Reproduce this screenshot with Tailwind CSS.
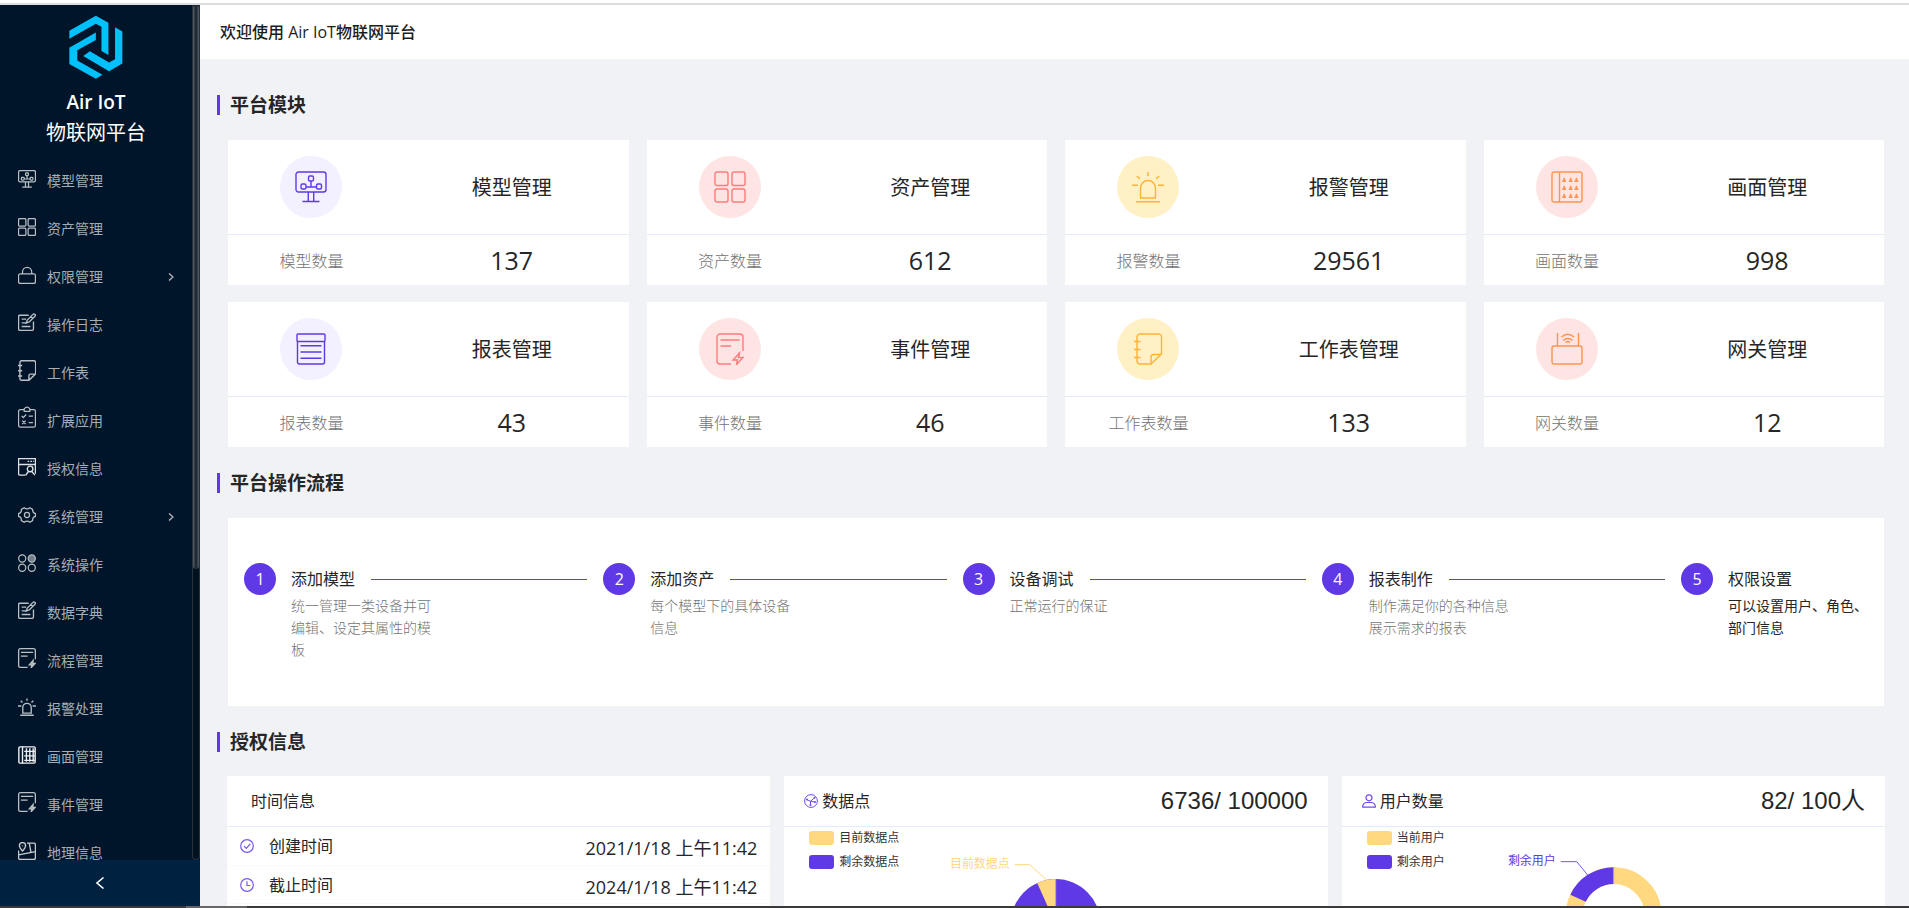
<!DOCTYPE html>
<html lang="zh-CN">
<head>
<meta charset="utf-8">
<title>Air IoT物联网平台</title>
<script src="https://cdn.jsdelivr.net/npm/@tailwindcss/browser@4"></script>
</head>
<body class="flex h-screen flex-col overflow-hidden bg-white font-['Open_Sans','Noto_Sans_CJK_SC',sans-serif] text-base leading-6 text-[#262626]">

<svg class="hidden" aria-hidden="true">
  <symbol id="i-model" viewBox="0 0 32 32"><rect x="1" y="1" width="30" height="20" rx="2.5"/><rect x="13.5" y="5" width="5" height="5" rx="1.5"/><rect x="6" y="13" width="5" height="5" rx="1.5"/><rect x="21.500" y="13" width="5" height="5" rx="1.5"/><path d="M16 10v6M11 16h10.500M13.300 21v9.500M18.700 21v9.500M7.500 30.500h17"/></symbol>
  <symbol id="i-grid" viewBox="0 0 32 32"><rect x="1" y="1" width="13" height="13.500" rx="2"/><rect x="18" y="1" width="13" height="13.500" rx="2"/><rect x="1" y="18" width="13" height="13" rx="2"/><rect x="18" y="18" width="13" height="13" rx="2"/></symbol>
  <symbol id="i-alarm" viewBox="0 0 32 32"><path d="M8.500 27V17a7.500 7.500 0 0 1 15 0v10zM4 30.700h24M16 1v4M4.800 5l3.200 3M27.200 5L24 8M0 14.200h6M26 14.200h6"/></symbol>
  <symbol id="i-screen" viewBox="0 0 32 32"><rect x="1" y="1" width="30" height="30" rx="2"/><path d="M8.500 1v30"/><path fill="currentColor" stroke="none" d="M13.200 6l2.200 5H11zM19.700 6l2.200 5h-4.400zM25.400 6l2.200 5h-4.400zM13.200 14l2.200 5H11zM19.700 14l2.200 5h-4.400zM25.400 14l2.200 5h-4.400zM13.200 22l2.200 5H11zM19.700 22l2.200 5h-4.400zM25.400 22l2.200 5h-4.400z"/></symbol>
  <symbol id="i-report" viewBox="0 0 32 32"><rect x="2" y="1" width="28" height="7.500" rx="1"/><path d="M2.500 8.500V29a2 2 0 0 0 2 2h23a2 2 0 0 0 2-2V8.500M5.500 12.800h21M5.500 19h21M5.500 25.200h21"/></symbol>
  <symbol id="i-event" viewBox="0 0 32 32"><path d="M17 31H6a3 3 0 0 1-3-3V4a3 3 0 0 1 3-3h20a3 3 0 0 1 3 3v14M6.500 7h19M6.500 13h10.500M25.500 20l-6.500 7h4.500l-1 4.500 6.500-7h-4.500z"/></symbol>
  <symbol id="i-sheet" viewBox="0 0 32 32"><path d="M8 1h18.500a3 3 0 0 1 3 3v17L19 31H8a3 3 0 0 1-3-3V4a3 3 0 0 1 3-3zM19 31v-7a2.500 2.500 0 0 1 2.500-2.500h8M2 8.500h6.500M2 16.500h6.500M2 24.500h6.500"/></symbol>
  <symbol id="i-gateway" viewBox="0 0 32 32"><rect x="1" y="13" width="30" height="18" rx="2"/><path d="M6.500 0v13M27.500 0v13M10.500 4q6.200-5.500 12.500 0M12 7.500q4.800-4.200 9.500 0M14.500 9.500q2.200-2 4.500 0"/></symbol>
  <symbol id="i-lock" viewBox="0 0 32 32"><rect x="1" y="14" width="30" height="17" rx="3"/><path d="M8 14v-3.500a8.200 8.200 0 0 1 16.400 0V14"/></symbol>
  <symbol id="i-log" viewBox="0 0 32 32"><path d="M19 4H3.500A2.500 2.500 0 0 0 1 6.500v22A2.500 2.500 0 0 0 3.500 31H25a2.500 2.500 0 0 0 2.500-2.500V15M6.500 11h8M6.500 17.500h7M6.500 24h15.500M26.500 2.500a2.400 2.400 0 0 1 3.600 3.200L20 16l-5.500 2 2-5.500zM22.500 6.500l3.600 3.400"/></symbol>
  <symbol id="i-plugin" viewBox="0 0 32 38"><path d="M11 6H4a3 3 0 0 0-3 3v25a3 3 0 0 0 3 3h24a3 3 0 0 0 3-3V9a3 3 0 0 0-3-3h-7M11 9V4.500q5-6 10 0V9zM6.500 17l3 3 5-5.500M7.500 25.500l6 6M13.500 25.500l-6 6M19 17.500h7.500M19 29h7.500"/></symbol>
  <symbol id="i-auth" viewBox="0 0 32 32"><path d="M13 30.500H3.500A2.500 2.500 0 0 1 1 28V1h30v27M1 11.500h30M17 6h3M22 6h3M27 6h2"/><circle cx="21.500" cy="19.500" r="5"/><path d="M18.500 24l-5 7M24.500 24l5.500 6.500"/></symbol>
  <symbol id="i-gear" viewBox="0 0 32 32"><path d="M11 3Q16 7 21 3l5 3q-.5 6 5 7.500v5q-5.500 1.500-5 7.500l-5 3q-5-4-10 0l-5-3q.5-6-5-7.500v-5Q6.500 12 6 6z"/><circle cx="16" cy="16" r="4.500"/></symbol>
  <symbol id="i-ops" viewBox="0 0 32 32"><circle cx="7.500" cy="8" r="6.300"/><circle cx="24.500" cy="8" r="6.300" fill="currentColor" fill-opacity=".7"/><circle cx="7.500" cy="24.500" r="6.300"/><circle cx="24.500" cy="24.500" r="6.300"/></symbol>
  <symbol id="i-map" viewBox="0 0 32 32"><path d="M8 16Q2.500 9.500 2.500 6.500a5.500 5.500 0 0 1 11 0Q13.500 9.500 8 16zM8 6v1.500M16 2h12a3 3 0 0 1 3 3v23a3 3 0 0 1-3 3H4a3 3 0 0 1-3-3V15M1 23l30-6M20 2l3 16"/></symbol>
</svg>

<div class="h-[5px] shrink-0 border-b-2 border-[#dcdce1]"></div>

<div class="flex min-h-0 flex-1">
  <aside class="flex w-[200px] shrink-0 flex-col bg-[#001529]">
    <div class="flex min-h-0 flex-1">
      <div class="min-w-0 flex-1 overflow-hidden">
        <div class="flex h-[152px] flex-col items-center pt-2.5 text-white">
          <svg class="h-[65px] w-[54px]" viewBox="17 15 163 195" role="img" aria-label="Air IoT">
            <g fill="#00c1fb"><path d="M18 62L98 17l38 21v97l-21-12V50L98 41 18 86z"/><path d="M156 51l22 13v97l-40 23-78-46 20-14 58 34 18-10z"/><path d="M98 67v23L42 121v31l76 43-20 12-80-45v-49z"/></g>
          </svg>
          <p class="mt-2 text-[19px] leading-7 font-semibold">Air IoT</p>
          <p class="text-xl leading-8 font-['Noto_Sans_CJK_SC',sans-serif]">物联网平台</p>
        </div>
        <nav class="text-sm leading-[14px] text-[#a6adb4]">
          <a href="#" class="flex h-12 items-center gap-[11px] pr-4 pl-[18px]"><svg class="mb-1 size-[18px] fill-none stroke-[#b9bfc5] stroke-[2.2]"><use href="#i-model"/></svg><span>模型管理</span></a>
          <a href="#" class="flex h-12 items-center gap-[11px] pr-4 pl-[18px]"><svg class="mb-1 size-[18px] fill-none stroke-[#b9bfc5] stroke-[2.2]"><use href="#i-grid"/></svg><span>资产管理</span></a>
          <a href="#" class="flex h-12 items-center gap-[11px] pr-4 pl-[18px]"><svg class="mb-1 size-[18px] fill-none stroke-[#b9bfc5] stroke-[2.2]"><use href="#i-lock"/></svg><span class="flex-1">权限管理</span><svg class="mr-0.5 h-2 w-1.5 fill-none stroke-current stroke-[1.5]" viewBox="0 0 6 8"><path d="M1 0.500L5 4 1 7.500"/></svg></a>
          <a href="#" class="flex h-12 items-center gap-[11px] pr-4 pl-[18px]"><svg class="mb-1.5 size-[18px] fill-none stroke-[#b9bfc5] stroke-[2.4]"><use href="#i-log"/></svg><span>操作日志</span></a>
          <a href="#" class="flex h-12 items-center gap-[11px] pr-4 pl-[18px]"><svg class="mb-1.5 h-[21px] w-[18px] fill-none stroke-[#b9bfc5] stroke-[2.2]" viewBox="2 0 28 32" preserveAspectRatio="none"><path d="M8 1h18.500a3 3 0 0 1 3 3v17L19 31H8a3 3 0 0 1-3-3V4a3 3 0 0 1 3-3zM19 31v-7a2.500 2.500 0 0 1 2.500-2.500h8M2 8.500h6.500M2 16.500h6.500M2 24.500h6.500"/></svg><span>工作表</span></a>
          <a href="#" class="flex h-12 items-center gap-[11px] pr-4 pl-[18px]"><svg class="mb-2 h-[22px] w-[18px] fill-none stroke-[#b9bfc5] stroke-[2.2]"><use href="#i-plugin"/></svg><span>扩展应用</span></a>
          <a href="#" class="flex h-12 items-center gap-[11px] pr-4 pl-[18px]"><svg class="mb-1 size-[18px] fill-none stroke-[#dfe2e5] stroke-[2.4]"><use href="#i-auth"/></svg><span>授权信息</span></a>
          <a href="#" class="flex h-12 items-center gap-[11px] pr-4 pl-[18px]"><svg class="mb-1 size-[18px] fill-none stroke-[#b9bfc5] stroke-[2.2]"><use href="#i-gear"/></svg><span class="flex-1">系统管理</span><svg class="mr-0.5 h-2 w-1.5 fill-none stroke-current stroke-[1.5]" viewBox="0 0 6 8"><path d="M1 0.500L5 4 1 7.500"/></svg></a>
          <a href="#" class="flex h-12 items-center gap-[11px] pr-4 pl-[18px]"><svg class="mb-1 size-[18px] fill-none stroke-[#b9bfc5] stroke-[2.2]"><use href="#i-ops"/></svg><span>系统操作</span></a>
          <a href="#" class="flex h-12 items-center gap-[11px] pr-4 pl-[18px]"><svg class="mb-1.5 size-[18px] fill-none stroke-[#b9bfc5] stroke-[2.4]"><use href="#i-log"/></svg><span>数据字典</span></a>
          <a href="#" class="flex h-12 items-center gap-[11px] pr-4 pl-[18px]"><svg class="mb-1.5 h-[20px] w-[18px] fill-none stroke-[#b9bfc5] stroke-2" viewBox="2 0 28 32" preserveAspectRatio="none"><path d="M17 31H6a3 3 0 0 1-3-3V4a3 3 0 0 1 3-3h20a3 3 0 0 1 3 3v14M6.500 7h19M6.500 13h10.500"/><path class="fill-current" d="M25.500 20l-6 7h4l-1 4.500 6.500-7h-4z"/></svg><span>流程管理</span></a>
          <a href="#" class="flex h-12 items-center gap-[11px] pr-4 pl-[18px]"><svg class="mb-1 size-[18px] fill-none stroke-[#b9bfc5] stroke-[2.4]"><use href="#i-alarm"/></svg><span>报警处理</span></a>
          <a href="#" class="flex h-12 items-center gap-[11px] pr-4 pl-[18px]"><svg class="mb-1 size-[18px] fill-none stroke-current stroke-[2.500] text-[#eef0f2]" viewBox="0 0 32 32"><rect x="1.500" y="1.500" width="29" height="29" rx="2"/><path d="M8 1v30M15 4v24M21 4v24M27 4v24"/><path d="M11 9.500h19M11 17.500h19M11 25.500h19"/></svg><span>画面管理</span></a>
          <a href="#" class="flex h-12 items-center gap-[11px] pr-4 pl-[18px]"><svg class="mb-1.5 h-[20px] w-[18px] fill-none stroke-[#b9bfc5] stroke-2" viewBox="2 0 28 32" preserveAspectRatio="none"><path d="M17 31H6a3 3 0 0 1-3-3V4a3 3 0 0 1 3-3h20a3 3 0 0 1 3 3v14M6.500 7h19M6.500 13h10.500"/><path class="fill-current" d="M25.500 20l-6 7h4l-1 4.500 6.500-7h-4z"/></svg><span>事件管理</span></a>
          <a href="#" class="flex h-12 items-center gap-[11px] pr-4 pl-[18px]"><svg class="mb-1 size-[18px] fill-none stroke-[#c6cbd0] stroke-[2.4]"><use href="#i-map"/></svg><span>地理信息</span></a>
        </nav>
      </div>
      <div class="w-2 shrink-0 rounded-b border-x border-b border-[#26323c] bg-[#001220]">
        <div class="h-[66%] rounded bg-linear-to-r from-[#5b6066] via-[#14202b] to-[#5b6066]"></div>
      </div>
    </div>
    <button type="button" aria-label="收起菜单" class="flex h-[46px] shrink-0 items-center justify-center bg-[#002140] text-white">
      <svg class="h-3 w-2 fill-none stroke-current stroke-[1.5]" viewBox="0 0 8 12"><path d="M7.500 0.500L1 6l6.500 5.500"/></svg>
    </button>
  </aside>

  <main class="flex min-w-0 flex-1 flex-col overflow-hidden bg-[#f0f2f5]">
    <header class="flex h-[54px] shrink-0 items-center bg-white px-5">
      <h1 class="font-medium text-[#1c1c1c]">欢迎使用 Air IoT物联网平台</h1>
    </header>

    <div class="shrink-0 pr-6 pl-[17px] pt-8">
      <h2 class="flex h-7 items-center gap-2.5 text-[19px] font-bold"><span class="h-5 w-[3px] bg-[#6039e6]"></span>平台模块</h2>
      <div class="mt-[21px] mr-px ml-[11px] grid grid-cols-4 gap-x-[18px] gap-y-[17px]">
        <section class="bg-white">
          <div class="grid h-[94px] grid-cols-[5fr_7fr] items-center justify-items-center"><span class="flex size-[62px] items-center justify-center rounded-full bg-[#f3f0ff] text-[#6039e6]"><svg class="size-8 fill-none stroke-current stroke-[1.4]"><use href="#i-model"/></svg></span><h3 class="pt-0.5 text-xl">模型管理</h3></div>
          <div class="grid h-[51px] grid-cols-[5fr_7fr] items-center justify-items-center border-t border-[#e6ebfb]"><span class="pt-0.5 font-light text-[#737373]">模型数量</span><span class="text-[25px]">137</span></div>
        </section>
        <section class="bg-white">
          <div class="grid h-[94px] grid-cols-[5fr_7fr] items-center justify-items-center"><span class="flex size-[62px] items-center justify-center rounded-full bg-[#ffe4e4] text-[#fb7c7c]"><svg class="size-8 fill-none stroke-current stroke-[1.4]"><use href="#i-grid"/></svg></span><h3 class="pt-0.5 text-xl">资产管理</h3></div>
          <div class="grid h-[51px] grid-cols-[5fr_7fr] items-center justify-items-center border-t border-[#e6ebfb]"><span class="pt-0.5 font-light text-[#737373]">资产数量</span><span class="text-[25px]">612</span></div>
        </section>
        <section class="bg-white">
          <div class="grid h-[94px] grid-cols-[5fr_7fr] items-center justify-items-center"><span class="flex size-[62px] items-center justify-center rounded-full bg-[#fff1c5] text-[#ffb238]"><svg class="size-8 fill-none stroke-current stroke-[1.4]"><use href="#i-alarm"/></svg></span><h3 class="pt-0.5 text-xl">报警管理</h3></div>
          <div class="grid h-[51px] grid-cols-[5fr_7fr] items-center justify-items-center border-t border-[#e6ebfb]"><span class="pt-0.5 font-light text-[#737373]">报警数量</span><span class="text-[25px]">29561</span></div>
        </section>
        <section class="bg-white">
          <div class="grid h-[94px] grid-cols-[5fr_7fr] items-center justify-items-center"><span class="flex size-[62px] items-center justify-center rounded-full bg-[#ffe4e4] text-[#fb9550]"><svg class="size-8 fill-none stroke-current stroke-[1.4]"><use href="#i-screen"/></svg></span><h3 class="pt-0.5 text-xl">画面管理</h3></div>
          <div class="grid h-[51px] grid-cols-[5fr_7fr] items-center justify-items-center border-t border-[#e6ebfb]"><span class="pt-0.5 font-light text-[#737373]">画面数量</span><span class="text-[25px]">998</span></div>
        </section>
        <section class="bg-white">
          <div class="grid h-[94px] grid-cols-[5fr_7fr] items-center justify-items-center"><span class="flex size-[62px] items-center justify-center rounded-full bg-[#f3f0ff] text-[#6039e6]"><svg class="size-8 fill-none stroke-current stroke-[1.4]"><use href="#i-report"/></svg></span><h3 class="pt-0.5 text-xl">报表管理</h3></div>
          <div class="grid h-[51px] grid-cols-[5fr_7fr] items-center justify-items-center border-t border-[#e6ebfb]"><span class="pt-0.5 font-light text-[#737373]">报表数量</span><span class="text-[25px]">43</span></div>
        </section>
        <section class="bg-white">
          <div class="grid h-[94px] grid-cols-[5fr_7fr] items-center justify-items-center"><span class="flex size-[62px] items-center justify-center rounded-full bg-[#ffe4e4] text-[#fb7c7c]"><svg class="size-8 fill-none stroke-current stroke-[1.4]"><use href="#i-event"/></svg></span><h3 class="pt-0.5 text-xl">事件管理</h3></div>
          <div class="grid h-[51px] grid-cols-[5fr_7fr] items-center justify-items-center border-t border-[#e6ebfb]"><span class="pt-0.5 font-light text-[#737373]">事件数量</span><span class="text-[25px]">46</span></div>
        </section>
        <section class="bg-white">
          <div class="grid h-[94px] grid-cols-[5fr_7fr] items-center justify-items-center"><span class="flex size-[62px] items-center justify-center rounded-full bg-[#fff1c5] text-[#ffb238]"><svg class="size-8 fill-none stroke-current stroke-[1.4]"><use href="#i-sheet"/></svg></span><h3 class="pt-0.5 text-xl">工作表管理</h3></div>
          <div class="grid h-[51px] grid-cols-[5fr_7fr] items-center justify-items-center border-t border-[#e6ebfb]"><span class="pt-0.5 font-light text-[#737373]">工作表数量</span><span class="text-[25px]">133</span></div>
        </section>
        <section class="bg-white">
          <div class="grid h-[94px] grid-cols-[5fr_7fr] items-center justify-items-center"><span class="flex size-[62px] items-center justify-center rounded-full bg-[#ffe4e4] text-[#fb9550]"><svg class="size-8 fill-none stroke-current stroke-[1.4]"><use href="#i-gateway"/></svg></span><h3 class="pt-0.5 text-xl">网关管理</h3></div>
          <div class="grid h-[51px] grid-cols-[5fr_7fr] items-center justify-items-center border-t border-[#e6ebfb]"><span class="pt-0.5 font-light text-[#737373]">网关数量</span><span class="text-[25px]">12</span></div>
        </section>
      </div>

      <h2 class="mt-[22px] flex h-7 items-center gap-2.5 text-[19px] font-bold"><span class="h-5 w-[3px] bg-[#6039e6]"></span>平台操作流程</h2>
      <ol class="mt-[21px] mr-px ml-[11px] flex h-[188px] bg-white px-4 pt-[45px]">
        <li class="flex flex-1 gap-[15px]"><span class="flex size-8 shrink-0 items-center justify-center rounded-full bg-[#6039e6] text-white">1</span>
          <div class="flex-1"><div class="flex h-8 items-center gap-4 pr-4"><h3>添加模型</h3><span class="h-px flex-1 bg-[#6039e6]"></span></div><p class="w-[140px] text-sm leading-[22px] font-light text-[#737373]">统一管理一类设备并可编辑、设定其属性的模板</p></div></li>
        <li class="flex flex-1 gap-[15px]"><span class="flex size-8 shrink-0 items-center justify-center rounded-full bg-[#6039e6] text-white">2</span>
          <div class="flex-1"><div class="flex h-8 items-center gap-4 pr-4"><h3>添加资产</h3><span class="h-px flex-1 bg-[#6039e6]"></span></div><p class="w-[140px] text-sm leading-[22px] font-light text-[#737373]">每个模型下的具体设备信息</p></div></li>
        <li class="flex flex-1 gap-[15px]"><span class="flex size-8 shrink-0 items-center justify-center rounded-full bg-[#6039e6] text-white">3</span>
          <div class="flex-1"><div class="flex h-8 items-center gap-4 pr-4"><h3>设备调试</h3><span class="h-px flex-1 bg-[#6039e6]"></span></div><p class="w-[140px] text-sm leading-[22px] font-light text-[#737373]">正常运行的保证</p></div></li>
        <li class="flex flex-1 gap-[15px]"><span class="flex size-8 shrink-0 items-center justify-center rounded-full bg-[#6039e6] text-white">4</span>
          <div class="flex-1"><div class="flex h-8 items-center gap-4 pr-4"><h3>报表制作</h3><span class="h-px flex-1 bg-[#6039e6]"></span></div><p class="w-[140px] text-sm leading-[22px] font-light text-[#737373]">制作满足你的各种信息展示需求的报表</p></div></li>
        <li class="flex gap-[15px]"><span class="flex size-8 shrink-0 items-center justify-center rounded-full bg-[#6039e6] text-white">5</span>
          <div><h3 class="leading-8">权限设置</h3><p class="w-[140px] text-sm leading-[22px]">可以设置用户、角色、部门信息</p></div></li>
      </ol>

      <h2 class="mt-[22px] flex h-7 items-center gap-2.5 text-[19px] font-bold"><span class="h-5 w-[3px] bg-[#6039e6]"></span>授权信息</h2>
      <div class="mt-5 ml-2.5 grid grid-cols-3 gap-3.5">
        <section class="bg-white">
          <h3 class="flex h-[51px] items-center border-b border-[#e2ebfb] px-6">时间信息</h3>
          <dl>
            <div class="flex h-[39px] items-center border-b border-[#fafafa] px-[13px]"><svg class="mr-[15px] size-3.5 fill-none stroke-[#7a58ee] stroke-[1.2]" viewBox="0 0 14 14"><circle cx="7" cy="7" r="6.300"/><path d="M4 7l2.300 2.300L10.200 5"/></svg><dt class="flex-1">创建时间</dt><dd class="pt-1 text-lg">2021/1/18 上午11:42</dd></div>
            <div class="flex h-[38px] items-center border-b border-[#fafafa] px-[13px]"><svg class="mr-[15px] size-3.5 fill-none stroke-[#7a58ee] stroke-[1.2]" viewBox="0 0 14 14"><circle cx="7" cy="7" r="6.300"/><path d="M7 3.200V7.500h3.300"/></svg><dt class="flex-1">截止时间</dt><dd class="pt-1 text-lg">2024/1/18 上午11:42</dd></div>
          </dl>
        </section>
        <section class="bg-white">
          <div class="flex h-[51px] items-center gap-1 border-b border-[#e2ebfb] px-5"><svg class="size-3.5 fill-none stroke-[#6f4bea]" viewBox="0 0 14 14"><circle cx="7" cy="7" r="6.400"/><path d="M2.500 5.500l4 1.800 4-3.500M6.500 7.300v3.500M6.500 7.300l4.500.7"/><g class="fill-[#6f4bea] stroke-none"><circle cx="3" cy="5.500" r="1"/><circle cx="10.500" cy="3.800" r="1"/><circle cx="11" cy="8" r="1"/><circle cx="6.500" cy="11" r="1"/></g></svg><h3 class="flex-1">数据点</h3><span class="font-['Liberation_Sans','Noto_Sans_CJK_SC',sans-serif] text-2xl">6736/ 100000</span></div>
          <div class="flex h-[260px]">
            <ul class="w-[120px] space-y-2.5 pt-1 pl-[25px] text-xs leading-[14px] text-[#333]"><li class="flex h-3.5 items-center gap-[5px]"><span class="h-3.5 w-[25px] shrink-0 rounded-[3px] bg-[#ffd880]"></span><span class="whitespace-nowrap">目前数据点</span></li><li class="flex h-3.5 items-center gap-[5px]"><span class="h-3.5 w-[25px] shrink-0 rounded-[3px] bg-[#6039e6]"></span><span class="whitespace-nowrap">剩余数据点</span></li></ul>
            <svg class="mr-[120px] h-[200px] min-w-0 flex-1 overflow-visible" viewBox="0 0 304 200"><circle cx="152" cy="97" r="45" fill="#6039e6"/><path d="M152 97V52A45 45 0 0 0 133.500 56z" fill="#ffd880"/><path d="M152 97V52" stroke="#b9a2c8"/><path d="M111 37.500h15l17 15.500" fill="none" stroke="#ffd880"/><text x="106" y="41" text-anchor="end" font-size="12" fill="#ffd880">目前数据点</text></svg>
          </div>
        </section>
        <section class="bg-white">
          <div class="flex h-[51px] items-center gap-1 border-b border-[#e2ebfb] px-5"><svg class="size-3.5 fill-none stroke-[#6f4bea] stroke-[1.2]" viewBox="0 0 14 14"><circle cx="7" cy="3.800" r="3"/><path d="M.7 13.200v-1Q1.500 8.500 5 8.500h4q3.500 0 4.300 3.700v1z"/></svg><h3 class="flex-1">用户数量</h3><span class="font-['Liberation_Sans','Noto_Sans_CJK_SC',sans-serif] text-2xl">82/ 100人</span></div>
          <div class="flex h-[260px]">
            <ul class="w-[120px] space-y-2.5 pt-1 pl-[25px] text-xs leading-[14px] text-[#333]"><li class="flex h-3.5 items-center gap-[5px]"><span class="h-3.5 w-[25px] shrink-0 rounded-[3px] bg-[#ffd880]"></span><span class="whitespace-nowrap">当前用户</span></li><li class="flex h-3.5 items-center gap-[5px]"><span class="h-3.5 w-[25px] shrink-0 rounded-[3px] bg-[#6039e6]"></span><span class="whitespace-nowrap">剩余用户</span></li></ul>
            <svg class="mr-[120px] h-[200px] min-w-0 flex-1 overflow-visible" viewBox="0 0 304 200"><circle cx="152" cy="88" r="39.500" fill="none" stroke="#ffd880" stroke-width="17"/><path d="M152 48.500A39.500 39.500 0 0 0 116.300 71.200" fill="none" stroke="#6039e6" stroke-width="17"/><path d="M152 40v17" stroke="#b9a2c8"/><path d="M99 34.500h16l11 13.500" fill="none" stroke="#7a58ee"/><text x="94" y="38" text-anchor="end" font-size="12" fill="#6039e6">剩余用户</text></svg>
          </div>
        </section>
      </div>
    </div>
  </main>
</div>

<div class="flex h-0.5 shrink-0 bg-[#3a3a3a]"><span class="ml-[186px] w-[61px] bg-[#666]"></span></div>
</body>
</html>
